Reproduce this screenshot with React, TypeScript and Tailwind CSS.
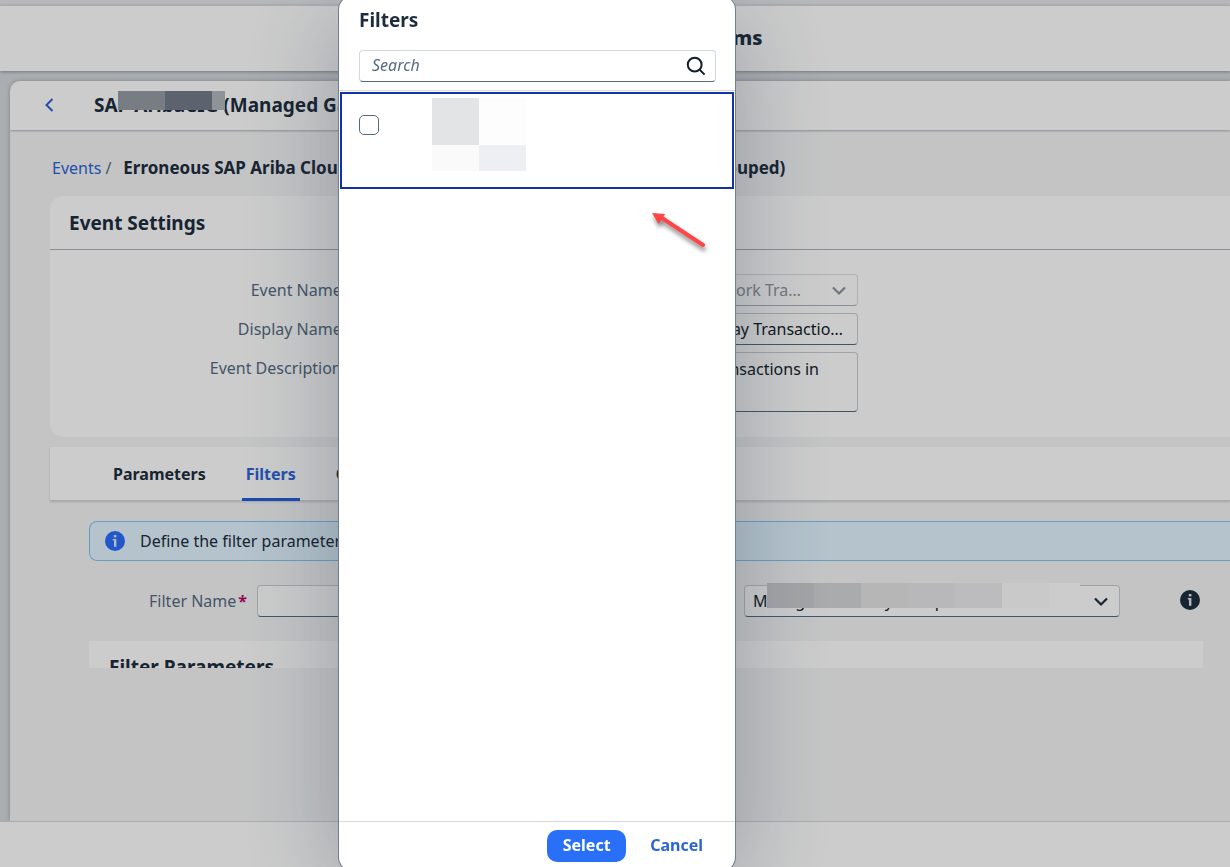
import React, { useState } from 'react';

// Colors of the blurred-out blocks that hide customer data
const titleBlocks = ['w-[47px] bg-[#979ba4]', 'w-[47px] bg-[#737c8a]', 'w-[13px] bg-[#b3b8bd]'];
const groupBlocks = [
  'w-[47px] bg-[#cdced0]',
  'w-[47px] bg-[#d5d6d7]',
  'w-[47px] bg-[#e4e4e5]',
  'w-[47px] bg-[#e6e7e9]',
  'w-[47px] bg-[#ebecee]',
  'w-[47px] bg-[#fcfcfd]',
  'w-[31px] bg-[#ffffff]',
];

const fieldClass =
  'w-full rounded-[4px] border border-[#c9cdd3] border-b-[#556b82] bg-white text-[#131e29]';

function InfoIcon({ className }: { className: string }) {
  return (
    <svg viewBox="0 0 20 20" className={className} aria-hidden="true">
      <circle cx="10" cy="10" r="10" fill="currentColor" />
      <rect x="8.8" y="4" width="2.6" height="2.4" fill="#e4e8ee" />
      <path d="M7.8 8h3.6v7.8H9V9.6H7.8z" fill="#e4e8ee" />
    </svg>
  );
}

function ChevronDown({ className }: { className: string }) {
  return (
    <svg viewBox="0 0 14 10" className={className} fill="none" stroke="currentColor" strokeWidth="2.2" aria-hidden="true">
      <path d="M1 1.5l6 6 6-6" />
    </svg>
  );
}

function EventSettings() {
  return (
    <section className="ml-10 h-[241px] rounded-l-[14px] bg-white">
      <div className="flex h-[54px] items-center border-b border-[#a8b3bd] pl-[19px]">
        <h2 className="text-[19px] font-bold">Event Settings</h2>
      </div>
      <div className="mt-6 grid w-[808px] grid-cols-[296px_1fr] gap-x-3 gap-y-[7px]">
        <label htmlFor="event-name" className="pt-1 text-right text-[#556b82]">Event Name:</label>
        <div className="relative">
          <select
            id="event-name"
            disabled
            className="h-8 w-full appearance-none truncate rounded-[4px] border border-[#dcdfe3] border-b-[#a9b3c0] bg-white pr-14 pl-3 text-right text-[#8f959d] opacity-100"
          >
            <option>SAP Ariba Business Network Tra…</option>
          </select>
          <ChevronDown className="absolute top-3 right-3 h-[10px] w-[14px] text-[#8c929b]" />
        </div>
        <label htmlFor="display-name" className="pt-1 text-right text-[#556b82]">Display Name:</label>
        <input
          id="display-name"
          className={`${fieldClass} h-8 px-[14px] text-right`}
          defaultValue="Erroneous SAP Ariba Cloud Integration Gateway Transactio…"
        />
        <label htmlFor="event-description" className="pt-1 text-right text-[#556b82]">Event Description:</label>
        <textarea
          id="event-description"
          className={`${fieldClass} h-[60px] resize-none py-1 pr-[38px] pl-2 text-right`}
          defaultValue="Number of erroneous Ariba transactions in"
        />
      </div>
    </section>
  );
}

function FilterForm() {
  return (
    <div className="pl-[79px]">
      <div className="mt-5 flex h-10 items-center gap-[15px] rounded-l-lg border border-r-0 border-[#7ec8f5] bg-[#e1f4ff] pl-[15px]">
        <InfoIcon className="size-5 text-[#2a6dfa]" />
        <span>Define the filter parameters</span>
      </div>
      <div className="mt-6 flex h-8 items-center">
        <label htmlFor="filter-name" className="w-[158px] text-right text-[#556b82]">
          Filter Name<span className="ml-0.5 font-bold text-[#ba066c]">*</span>
        </label>
        <input id="filter-name" className={`${fieldClass} ml-[10px] h-8 max-w-[374px] px-2`} />
        <div className="relative ml-auto w-[376px] shrink-0">
          <select
            aria-label="Filter group"
            className={`${fieldClass} h-8 appearance-none px-2`}
          >
            <option>Managed Gateway Groups</option>
          </select>
          <ChevronDown className="absolute top-3 right-3 h-[10px] w-[14px]" />
          <div className="absolute -top-[2px] left-[23px] flex h-[25px]">
            {groupBlocks.map((block) => (
              <div key={block} className={block} />
            ))}
          </div>
        </div>
        <button type="button" aria-label="More information" className="mr-[30px] mb-0.5 ml-[60px] shrink-0">
          <InfoIcon className="size-5" />
        </button>
      </div>
      <div className="mt-6 mr-[27px] h-[27px] overflow-hidden bg-white pt-3 pl-5">
        <h2 className="text-[19px] leading-7 font-bold">Filter Parameters</h2>
      </div>
    </div>
  );
}

function FilterDialog() {
  const [query, setQuery] = useState('');
  const [checked, setChecked] = useState(false);

  return (
    <div
      role="dialog"
      aria-label="Filters"
      className="relative -my-1 ml-[339px] flex w-[396px] flex-col rounded-[14px] bg-white shadow-[0_0_0_1px_#6f7f8f,0_20px_100px_rgba(34,53,72,0.32)]"
    >
      <div className="border-b border-[#d9d9d9] pt-[10px] pr-[19px] pb-2 pl-5">
        <h1 className="text-[19px] leading-7 font-bold">Filters</h1>
        <div className="mt-4 flex h-8 items-center rounded-[4px] border border-[#d1d8de] border-b-[#556b82] pr-[9px] pl-3">
          <input
            aria-label="Search"
            placeholder="Search"
            value={query}
            onChange={(e) => setQuery(e.target.value)}
            className="min-w-0 flex-1 pb-0.5 outline-none placeholder:text-[#556b82] placeholder:italic"
          />
          <button type="button" aria-label="Start search">
            <svg viewBox="0 0 20 20" className="size-5" fill="none" stroke="#131e29" strokeWidth="2">
              <circle cx="8.7" cy="8.7" r="6.9" />
              <path d="M13.6 13.6l5 5" />
            </svg>
          </button>
        </div>
      </div>
      <div className="mx-px mt-px flex h-[97px] items-start border-2 border-[#1232a8] pl-[17px]">
        <input
          type="checkbox"
          aria-label="Select filter entry"
          checked={checked}
          onChange={() => setChecked(!checked)}
          className="mt-[21px] size-5 appearance-none rounded-[5px] border border-[#556b82] bg-white checked:bg-[#2a6dfa]"
        />
        <div className="mt-1 ml-[53px] grid grid-cols-[47px_47px] grid-rows-[47px_26px]">
          <div className="bg-[#e3e4e6]" />
          <div className="bg-[#fdfdfd]" />
          <div className="bg-[#fafafa]" />
          <div className="bg-[#eeeff3]" />
        </div>
      </div>
      <div className="flex-1" />
      <svg viewBox="0 0 60 46" className="absolute top-[214px] left-[311px] h-[46px] w-[60px]" aria-hidden="true">
        <g className="drop-shadow-[1px_4px_2px_rgba(0,0,0,0.45)]">
          <path d="M12 8l41 27" stroke="#ff4545" strokeWidth="4" strokeLinecap="round" />
          <path d="M2 3l13 1-6.500 10z" fill="#ff4545" />
        </g>
      </svg>
      <div className="flex h-[50px] items-start justify-end gap-3 border-t border-[#d9d9d9] pt-2 pr-5 font-bold">
        <button type="button" className="h-8 w-[79px] rounded-[10px] bg-[#2a6ff7] pb-0.5 text-white">Select</button>
        <button type="button" className="h-8 px-3 pb-0.5 text-[#2a64d6]">Cancel</button>
      </div>
    </div>
  );
}

export default function App() {
  return (
    <div className="relative flex h-screen flex-col overflow-hidden bg-[#d5dadd] font-['Noto_Sans',sans-serif] text-base leading-6 text-[#1d2d3e]">
      <div className="h-[5px] shrink-0 bg-[#e6e7ea]" />
      <header className="z-10 flex h-[66px] shrink-0 items-center justify-center border-t border-[#d5dadd] bg-white pb-0.5 shadow-[0_1px_3px_rgba(34,53,72,0.4)]">
        <h1 className="text-xl font-extrabold">Interface - Managed Systems</h1>
      </header>

      <main className="mt-[10px] ml-[10px] min-h-0 flex-1 overflow-hidden rounded-tl-[10px] bg-[#f5f6f7] shadow-[0_0_4px_rgba(34,53,72,0.35)]">
        <div className="flex h-[49px] items-center bg-white pb-px pl-[34px] shadow-[0_1px_2px_rgba(34,53,72,0.35)]">
          <button type="button" aria-label="Back" className="text-[#2a64d6]">
            <svg viewBox="0 0 12 14" className="h-[14px] w-3" fill="none" stroke="currentColor" strokeWidth="2">
              <path d="M8.500 1L2.500 7l6 6" />
            </svg>
          </button>
          <div className="relative ml-[38px]">
            <h1 className="text-[19px] font-bold whitespace-nowrap">SAP AribaCIG (Managed Gateway)</h1>
            <div className="absolute -top-[2px] left-6 flex h-[19px]">
              {titleBlocks.map((block) => (
                <div key={block} className={block} />
              ))}
            </div>
          </div>
        </div>

        <nav aria-label="Breadcrumb" className="mt-[26px] mb-4 ml-[42px] flex gap-1 whitespace-nowrap">
          <a href="#events" className="text-[#2a64d6]">Events</a>
          <span className="text-[#556b82]">/</span>
          <span className="ml-2 text-[17px] font-bold">Erroneous SAP Ariba Cloud Integration Gateway Transactions Errors (Grouped)</span>
        </nav>

        <EventSettings />

        <div role="tablist" className="mt-[10px] ml-10 flex h-[54px] items-stretch gap-8 border-b border-[#d5d7da] bg-white pl-[59px] font-bold shadow-[0_1px_2px_rgba(34,53,72,0.2)]">
          <button type="button" role="tab" className="px-1">Parameters</button>
          <button type="button" role="tab" aria-selected="true" className="-mb-px border-b-[3px] border-[#1f5fdc] px-1 pt-0.5 text-[#2a64d6]">Filters</button>
          <button type="button" role="tab" className="px-1">Overview</button>
        </div>

        <FilterForm />
      </main>

      <footer className="z-10 h-[46px] shrink-0 border-t border-[#d5d7da] bg-white" />

      <div className="fixed inset-0 z-20 flex overflow-hidden bg-black/20">
        <FilterDialog />
      </div>
    </div>
  );
}
